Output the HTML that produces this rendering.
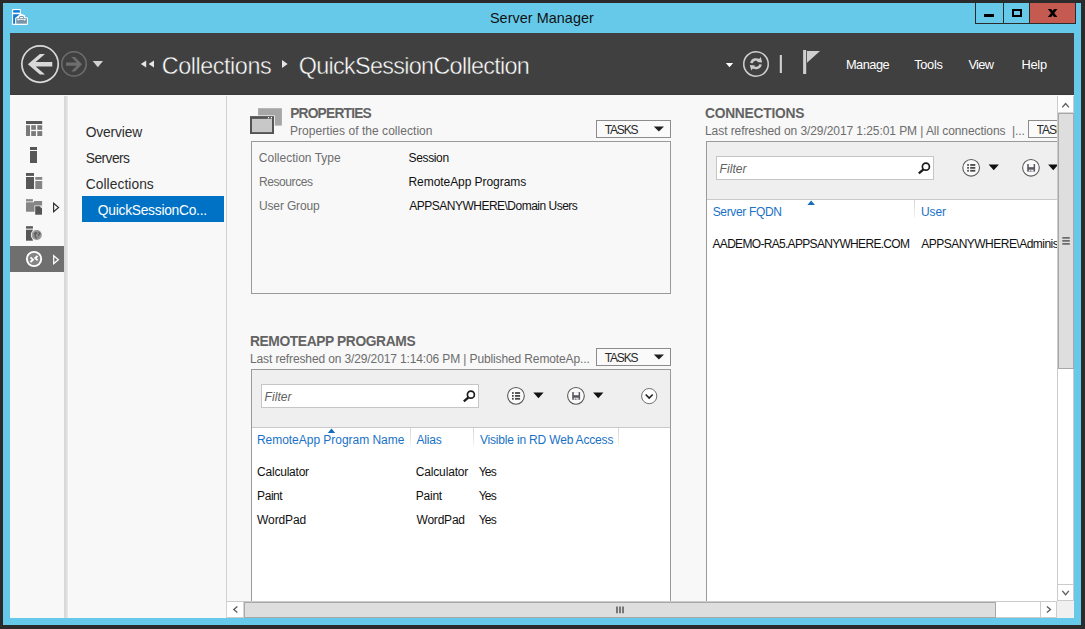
<!DOCTYPE html>
<html lang="en">
<head>
<meta charset="utf-8">
<title>Server Manager</title>
<style>
html,body{margin:0;padding:0;}
body{width:1085px;height:629px;overflow:hidden;background:#2b2b2b;position:relative;font-family:"Liberation Sans",sans-serif;}
.a{position:absolute;box-sizing:border-box;}
.t{position:absolute;white-space:pre;display:block;}
svg{position:absolute;overflow:visible;}
</style>
</head>
<body>
<!-- window frame -->
<div class="a" style="left:3px;top:3px;width:1078px;height:622px;background:#66c9ea;"></div>

<!-- caption buttons -->
<div class="a" style="left:975px;top:3px;width:101px;height:21px;background:#2b2b2b;"></div>
<div class="a" style="left:976px;top:3px;width:27px;height:20px;background:#66c9ea;"></div>
<div class="a" style="left:1004px;top:3px;width:25px;height:20px;background:#66c9ea;"></div>
<div class="a" style="left:1030px;top:3px;width:45.3px;height:20px;background:#c45a50;"></div>
<div class="a" style="left:984px;top:14px;width:10px;height:3px;background:#000;"></div>
<div class="a" style="left:1012px;top:9px;width:10px;height:8px;border:2px solid #000;"></div>
<svg style="left:1047px;top:8px;" width="12" height="10" viewBox="1047 8 12 10"><path d="M1047.9 9 H1051.2 L1057.4 17 H1054.1 Z M1054.1 9 H1057.4 L1051.2 17 H1047.9 Z" fill="#000"/></svg>

<!-- app icon -->
<svg style="left:12px;top:9px;" width="17" height="17" viewBox="12 9 17 17">
  <rect x="12" y="9" width="8.8" height="16" rx="1.1" fill="#fff"/>
  <path d="M20.6 13.4 L24.8 15.3 V18 H15.1 V17.6 Z" fill="#fff"/>
  <rect x="18.3" y="15.2" width="6.6" height="3.4" rx="1" fill="#fff"/>
  <rect x="15.1" y="17.2" width="12.8" height="7.8" rx="1.1" fill="#fff"/>
  <rect x="13.15" y="10.15" width="6.65" height="2.45" fill="#0f78d4"/>
  <path d="M13.15 14.2 H19.8 L15.1 17.9 V23.7 H13.15 Z" fill="#0f78d4"/>
  <rect x="19.6" y="16.5" width="3.9" height="2.4" rx="0.5" fill="#fff" stroke="#7a94aa" stroke-width="1"/>
  <rect x="16.2" y="18.2" width="10.7" height="5.5" fill="#7a94aa"/>
  <rect x="17.1" y="18.9" width="8.9" height="0.8" fill="#fff"/>
  <path d="M17.7 19.6 h1.8 l-0.9 1.2 Z M23.6 19.6 h1.8 l-0.9 1.2 Z" fill="#fff"/>
</svg>

<!-- header -->
<div class="a" style="left:10px;top:33px;width:1064px;height:62px;background:#404040;"></div>

<!-- back / forward -->
<svg style="left:20px;top:44px;" width="90" height="40" viewBox="20 44 90 40">
  <circle cx="40.05" cy="64.1" r="18.2" fill="none" stroke="#d9d9d9" stroke-width="1.7"/>
  <path d="M27.9 64.2 L39.9 54 H45 L35.7 61.9 H52.3 V66.5 H35.7 L45 74.4 H39.9 Z" fill="#d9d9d9"/>
  <circle cx="74" cy="63.9" r="12.2" fill="none" stroke="#6e6e6e" stroke-width="1.5"/>
  <path d="M82.1 64.2 L74.9 57 H71.2 L76.8 62.6 H66 V65.8 H76.8 L71.2 71.4 H74.9 Z" fill="#6e6e6e"/>
  <path d="M92.7 61 H103 L97.85 67.2 Z" fill="#d2d2d2"/>
</svg>

<!-- breadcrumb arrows -->
<svg style="left:140px;top:58px;" width="150" height="12" viewBox="140 58 150 12">
  <path d="M146.2 60.6 V67.6 L140.8 64.1 Z M154 60.6 V67.6 L148.6 64.1 Z" fill="#e6e6e6"/>
  <path d="M282 60 V68 L287.6 64 Z" fill="#e6e6e6"/>
</svg>

<!-- header right icons -->
<svg style="left:720px;top:46px;" width="110" height="36" viewBox="720 46 110 36">
  <path d="M725.8 63 H733.2 L729.5 67.3 Z" fill="#fff"/>
  <circle cx="756" cy="64" r="12.25" fill="none" stroke="#cfcfcf" stroke-width="1.55"/>
  <path d="M751.45 63.1 A4.7 4.3 0 0 1 759.9 61.2" fill="none" stroke="#cdcdcd" stroke-width="2.5"/>
  <path d="M760.7 56.9 L762.2 62.6 L757 62.1 Z" fill="#cdcdcd"/>
  <path d="M760.55 64.4 A4.7 4.3 0 0 1 752.1 66.3" fill="none" stroke="#cdcdcd" stroke-width="2.5"/>
  <path d="M751.3 70.6 L749.8 64.9 L755 65.4 Z" fill="#cdcdcd"/>
  <rect x="779.8" y="55" width="2.1" height="18" fill="#d0d0d0"/>
  <rect x="803.1" y="50" width="3.1" height="24" fill="#cfcfcf"/>
  <path d="M807 51 H820 L807 62.7 Z" fill="#cfcfcf"/>
</svg>

<!-- content background -->
<div class="a" style="left:10px;top:95px;width:1064px;height:523px;background:#f8f8f8;"></div>
<div class="a" style="left:10px;top:94px;width:1064px;height:1px;background:#3b3b3b;"></div>

<!-- sidebar -->
<div class="a" style="left:64px;top:96px;width:3.6px;height:522px;background:linear-gradient(90deg,#dadada,#d8d8d8 35%,#ebebeb);"></div>
<div class="a" style="left:226px;top:96px;width:1px;height:522px;background:#d2d2d2;"></div>
<div class="a" style="left:10px;top:246px;width:54px;height:26px;background:#6f6f6f;"></div>

<!-- sidebar icons -->
<svg style="left:26px;top:120px;" width="36" height="150" viewBox="26 120 36 150">
  <!-- dashboard -->
  <rect x="26" y="121" width="16.2" height="3" fill="#575757"/>
  <rect x="26" y="125.2" width="4" height="10.8" fill="#7a7a7a"/>
  <rect x="31.2" y="125.2" width="4.7" height="4.6" fill="#7a7a7a"/>
  <rect x="37.3" y="125.2" width="4.9" height="4.6" fill="#7a7a7a"/>
  <rect x="31.2" y="131.1" width="4.7" height="4.9" fill="#7a7a7a"/>
  <rect x="37.3" y="131.1" width="4.9" height="4.9" fill="#7a7a7a"/>
  <!-- local server -->
  <rect x="30" y="147" width="7" height="3" fill="#575757"/>
  <rect x="30" y="151" width="7" height="12" fill="#575757"/>
  <!-- all servers -->
  <rect x="26" y="173" width="8" height="2.9" fill="#575757"/>
  <rect x="26" y="177" width="8" height="12" fill="#575757"/>
  <rect x="35.3" y="177" width="6.9" height="2.8" fill="#858585"/>
  <rect x="35.3" y="181" width="6.9" height="8" fill="#858585"/>
  <!-- file services -->
  <rect x="26" y="199.1" width="6.9" height="2.4" fill="#8b8b8b"/>
  <path d="M26 202.3 H34 V201 H42.1 V211.8 H26 Z" fill="#868686"/>
  <path d="M34.5 205.5 H42.7 V215.4 H34.5 Z" fill="#f8f8f8"/>
  <path d="M35.2 206.2 H42 V214.7 H35.2 Z" fill="#555"/>
  <path d="M39.4 206.2 H42 V208.6 Z" fill="#f1f1f1"/>
  <path d="M39.2 206.6 V208.8 H41.6" fill="none" stroke="#555" stroke-width="0.7"/>
  <path d="M53.6 203.3 L58.6 207.5 L53.6 211.7 Z" fill="none" stroke="#2e2e2e" stroke-width="1.15"/>
  <!-- IIS -->
  <rect x="26" y="226.2" width="6.9" height="2.4" fill="#575757"/>
  <rect x="26" y="229.7" width="6.9" height="11" fill="#575757"/>
  <circle cx="36.7" cy="235" r="5.9" fill="#f4f4f4"/>
  <circle cx="36.7" cy="235" r="5" fill="#8e8e8e"/>
  <circle cx="36.7" cy="235" r="4.3" fill="none" stroke="#a8a8a8" stroke-width="0.7"/>
  <path d="M33.6 233.4 l1.8 -1.6 l1.6 0.4 l0.2 1.6 l-1.4 0.8 l0.2 1.8 l1.2 1 l-0.6 1.6 l-1.6 -1.4 l-0.4 -2 Z M38.4 231.6 l1.8 0.8 l0.6 2 l-1.2 0.4 l-0.8 1.8 l-0.8 -1.6 l0.8 -1.4 Z" fill="#626262"/>
  <!-- RDS (selected) -->
  <circle cx="34.05" cy="259" r="7.15" fill="#858585" stroke="#fff" stroke-width="1.9"/>
  <path d="M30.5 257.4 L33 259.7 L30.5 262 M37.6 256 L35.2 258.1 L37.6 260.2" fill="none" stroke="#fff" stroke-width="1.8"/>
  <path d="M53.7 255.7 L58.4 259.65 L53.7 263.6 Z" fill="none" stroke="#fff" stroke-width="1.25"/>
</svg>

<!-- nav selection -->
<div class="a" style="left:82px;top:196px;width:142px;height:26px;background:#0072c6;"></div>

<!-- PROPERTIES icon -->
<svg style="left:249px;top:108px;" width="34" height="28" viewBox="249 108 34 28">
  <rect x="258.1" y="108.2" width="23.8" height="17.4" fill="#a6a6a6"/>
  <rect x="249.3" y="115.4" width="25.5" height="19.3" fill="#f8f8f8"/>
  <rect x="250" y="116.1" width="24" height="17.9" fill="#545454"/>
  <rect x="252" y="118.9" width="20" height="13.2" fill="#c8c8c8"/>
  <rect x="267.9" y="117" width="1.2" height="1.4" fill="#fff"/><rect x="270.8" y="117" width="1.2" height="1.4" fill="#fff"/>
</svg>

<!-- TASKS buttons -->
<div class="a" style="left:596px;top:120px;width:75px;height:18px;border:1px solid #8c8c8c;background:#fafafa;"></div>
<div class="a" style="left:596px;top:348px;width:75px;height:18px;border:1px solid #8c8c8c;background:#fafafa;"></div>
<div class="a" style="left:1028px;top:120px;width:29px;height:18px;border:1px solid #8c8c8c;border-right:none;background:#fafafa;"></div>
<svg style="left:650px;top:120px;" width="20" height="250" viewBox="650 120 20 250">
  <path d="M653.8 126.4 H664 L658.9 131.6 Z" fill="#1e1e1e"/>
  <path d="M653.8 354.4 H664 L658.9 359.6 Z" fill="#1e1e1e"/>
</svg>

<!-- PROPERTIES box -->
<div class="a" style="left:251px;top:141px;width:420px;height:153px;border:1px solid #9a9a9a;background:#f8f8f8;"></div>

<!-- REMOTEAPP box -->
<div class="a" style="left:251px;top:369px;width:420px;height:232px;border:1px solid #9a9a9a;border-bottom:none;background:#fff;"></div>
<div class="a" style="left:252px;top:370px;width:418px;height:57px;background:#efefef;"></div>
<div class="a" style="left:252px;top:427px;width:418px;height:1px;background:#c9c9c9;"></div>
<div class="a" style="left:261px;top:384px;width:218px;height:24px;border:1px solid #c6c6c6;background:#fff;"></div>
<div class="a" style="left:410px;top:428px;width:1px;height:18px;background:linear-gradient(#d4d4d4,#f4f4f4);"></div>
<div class="a" style="left:473px;top:428px;width:1px;height:18px;background:linear-gradient(#d4d4d4,#f4f4f4);"></div>
<div class="a" style="left:618px;top:428px;width:1px;height:18px;background:linear-gradient(#d4d4d4,#f4f4f4);"></div>

<!-- CONNECTIONS box -->
<div class="a" style="left:706px;top:141px;width:352px;height:460px;border:1px solid #9a9a9a;border-right:none;border-bottom:none;background:#fff;"></div>
<div class="a" style="left:707px;top:142px;width:350px;height:57px;background:#efefef;"></div>
<div class="a" style="left:707px;top:199px;width:350px;height:1px;background:#c9c9c9;"></div>
<div class="a" style="left:716px;top:156px;width:218px;height:24px;border:1px solid #c6c6c6;background:#fff;"></div>
<div class="a" style="left:914px;top:200px;width:1px;height:18px;background:linear-gradient(#d4d4d4,#f4f4f4);"></div>

<!-- toolbar icons: remoteapp -->
<svg style="left:460px;top:384px;" width="200" height="24" viewBox="460 384 200 24">
  <circle cx="470.9" cy="394.7" r="3.5" fill="none" stroke="#1c1c1c" stroke-width="1.7"/><path d="M468.5 397.4 L463.8 401.4" stroke="#1c1c1c" stroke-width="2.3" fill="none"/>
  <circle cx="515.95" cy="395.85" r="8.35" fill="#fafafa" stroke="#5a5a5a" stroke-width="1.1"/>
  <rect x="512.00" y="392.10" width="1.7" height="1.8" fill="#484848"/><rect x="515.00" y="392.10" width="5.1" height="1.8" fill="#484848"/>
  <rect x="512.00" y="395.00" width="1.7" height="1.8" fill="#484848"/><rect x="515.00" y="395.00" width="5.1" height="1.8" fill="#484848"/>
  <rect x="512.00" y="397.90" width="1.7" height="1.8" fill="#484848"/><rect x="515.00" y="397.90" width="5.1" height="1.8" fill="#484848"/>
  <path d="M533.3 392.60 h10.3 l-5.15 5.6 Z" fill="#111"/>
  <circle cx="575.95" cy="395.85" r="8.35" fill="#fafafa" stroke="#5a5a5a" stroke-width="1.1"/>
  <rect x="572.20" y="392.10" width="7.9" height="7.6" fill="#585a62"/>
  <rect x="573.80" y="392.10" width="4.8" height="3.1" fill="#fafafa"/>
  <rect x="573.80" y="397.70" width="4.8" height="2" fill="#e2e2e4"/><rect x="575.20" y="398.60" width="1" height="1.1" fill="#585a62"/>
  <path d="M593.1 392.60 h10.3 l-5.15 5.6 Z" fill="#111"/>
  <circle cx="649.2" cy="396.1" r="7.6" fill="#fff" stroke="#707070" stroke-width="1"/>
  <path d="M645.7 394.5 L649.2 398 L652.7 394.5" fill="none" stroke="#222" stroke-width="1.7"/>
</svg>

<!-- toolbar icons: connections -->
<svg style="left:915px;top:156px;width:142px;height:24px;overflow:hidden;" viewBox="915 156 142 24">
  <circle cx="925.9" cy="166.7" r="3.5" fill="none" stroke="#1c1c1c" stroke-width="1.7"/><path d="M923.5 169.4 L918.8 173.4" stroke="#1c1c1c" stroke-width="2.3" fill="none"/>
  <circle cx="971.15" cy="167.8" r="8.35" fill="#fafafa" stroke="#5a5a5a" stroke-width="1.1"/>
  <rect x="967.20" y="164.05" width="1.7" height="1.8" fill="#484848"/><rect x="970.20" y="164.05" width="5.1" height="1.8" fill="#484848"/>
  <rect x="967.20" y="166.95" width="1.7" height="1.8" fill="#484848"/><rect x="970.20" y="166.95" width="5.1" height="1.8" fill="#484848"/>
  <rect x="967.20" y="169.85" width="1.7" height="1.8" fill="#484848"/><rect x="970.20" y="169.85" width="5.1" height="1.8" fill="#484848"/>
  <path d="M988.6 164.55 h10.3 l-5.15 5.6 Z" fill="#111"/>
  <circle cx="1030.95" cy="167.8" r="8.35" fill="#fafafa" stroke="#5a5a5a" stroke-width="1.1"/>
  <rect x="1027.20" y="164.05" width="7.9" height="7.6" fill="#585a62"/>
  <rect x="1028.80" y="164.05" width="4.8" height="3.1" fill="#fafafa"/>
  <rect x="1028.80" y="169.65" width="4.8" height="2" fill="#e2e2e4"/><rect x="1030.20" y="170.55" width="1" height="1.1" fill="#585a62"/>
  <path d="M1048.1 164.55 h10.3 l-5.15 5.6 Z" fill="#111"/>
</svg>

<!-- sort arrows -->
<svg style="left:320px;top:190px;" width="520" height="250" viewBox="320 190 520 250">
  <path d="M327.8 432.9 H335.2 L331.5 428.5 Z" fill="#166bbb"/>
  <path d="M807.4 204.9 H814.9 L811.15 200.5 Z" fill="#166bbb"/>
</svg>

<span class="t" id="t0" style="left:489.92px;top:9.11px;font-size:14.4px;line-height:19px;letter-spacing:0.059px;color:#111;font-weight:400;font-style:normal;">Server Manager</span>
<span class="t" id="t1" style="left:161.86px;top:50.59px;font-size:23.4px;line-height:30px;letter-spacing:-0.462px;color:#ffffff;font-weight:400;font-style:normal;-webkit-text-stroke:0.45px #404040;">Collections</span>
<span class="t" id="t2" style="left:298.66px;top:50.59px;font-size:23.4px;line-height:30px;letter-spacing:-0.690px;color:#ffffff;font-weight:400;font-style:normal;-webkit-text-stroke:0.45px #404040;">QuickSessionCollection</span>
<span class="t" id="t3" style="left:845.89px;top:56.06px;font-size:12.8px;line-height:17px;letter-spacing:-0.492px;color:#fff;font-weight:400;font-style:normal;">Manage</span>
<span class="t" id="t4" style="left:914.19px;top:56.06px;font-size:12.8px;line-height:17px;letter-spacing:-0.300px;color:#fff;font-weight:400;font-style:normal;">Tools</span>
<span class="t" id="t5" style="left:968.49px;top:56.06px;font-size:12.8px;line-height:17px;letter-spacing:-0.690px;color:#fff;font-weight:400;font-style:normal;">View</span>
<span class="t" id="t6" style="left:1021.59px;top:56.06px;font-size:12.8px;line-height:17px;letter-spacing:-0.283px;color:#fff;font-weight:400;font-style:normal;">Help</span>
<span class="t" id="t7" style="left:85.75px;top:123.62px;font-size:13.8px;line-height:18px;letter-spacing:-0.154px;color:#2d2d2d;font-weight:400;font-style:normal;">Overview</span>
<span class="t" id="t8" style="left:85.75px;top:149.62px;font-size:13.8px;line-height:18px;letter-spacing:-0.560px;color:#2d2d2d;font-weight:400;font-style:normal;">Servers</span>
<span class="t" id="t9" style="left:85.75px;top:176.42px;font-size:13.8px;line-height:18px;letter-spacing:0.053px;color:#2d2d2d;font-weight:400;font-style:normal;">Collections</span>
<span class="t" id="t10" style="left:97.85px;top:202.22px;font-size:13.8px;line-height:18px;letter-spacing:-0.267px;color:#fff;font-weight:400;font-style:normal;">QuickSessionCo...</span>
<span class="t" id="t11" style="left:290.15px;top:105.02px;font-size:13.8px;line-height:18px;letter-spacing:-0.807px;color:#636363;font-weight:700;font-style:normal;">PROPERTIES</span>
<span class="t" id="t12" style="left:704.95px;top:105.02px;font-size:13.8px;line-height:18px;letter-spacing:-0.253px;color:#636363;font-weight:700;font-style:normal;">CONNECTIONS</span>
<span class="t" id="t13" style="left:249.95px;top:332.92px;font-size:13.8px;line-height:18px;letter-spacing:-0.387px;color:#636363;font-weight:700;font-style:normal;">REMOTEAPP PROGRAMS</span>
<span class="t" id="t14" style="left:290.02px;top:122.84px;font-size:12.0px;line-height:16px;letter-spacing:0.040px;color:#6d6d6d;font-weight:400;font-style:normal;">Properties of the collection</span>
<span class="t" id="t15" style="left:705.02px;top:122.84px;font-size:12.0px;line-height:16px;letter-spacing:-0.075px;color:#6d6d6d;font-weight:400;font-style:normal;">Last refreshed on 3/29/2017 1:25:01 PM | All connections  |...</span>
<span class="t" id="t16" style="left:250.02px;top:350.74px;font-size:12.0px;line-height:16px;letter-spacing:-0.124px;color:#6d6d6d;font-weight:400;font-style:normal;">Last refreshed on 3/29/2017 1:14:06 PM | Published RemoteAp...</span>
<span class="t" id="t17" style="left:604.72px;top:121.64px;font-size:12.0px;line-height:16px;letter-spacing:-1.158px;color:#2a2a2a;font-weight:400;font-style:normal;">TASKS</span>
<span class="t" id="t18" style="left:604.72px;top:349.74px;font-size:12.0px;line-height:16px;letter-spacing:-1.158px;color:#2a2a2a;font-weight:400;font-style:normal;">TASKS</span>
<span class="t" id="t19" style="left:1036.52px;top:121.64px;font-size:12.0px;line-height:16px;letter-spacing:-0.966px;color:#2a2a2a;font-weight:400;font-style:normal;width:20.0px;overflow:hidden;">TASKS</span>
<span class="t" id="t20" style="left:258.82px;top:149.64px;font-size:12.0px;line-height:16px;letter-spacing:0.001px;color:#6e6e6e;font-weight:400;font-style:normal;">Collection Type</span>
<span class="t" id="t21" style="left:259.02px;top:173.74px;font-size:12.0px;line-height:16px;letter-spacing:-0.424px;color:#6e6e6e;font-weight:400;font-style:normal;">Resources</span>
<span class="t" id="t22" style="left:259.02px;top:197.74px;font-size:12.0px;line-height:16px;letter-spacing:-0.159px;color:#6e6e6e;font-weight:400;font-style:normal;">User Group</span>
<span class="t" id="t23" style="left:408.52px;top:149.64px;font-size:12.0px;line-height:16px;letter-spacing:-0.352px;color:#111;font-weight:400;font-style:normal;">Session</span>
<span class="t" id="t24" style="left:408.52px;top:173.74px;font-size:12.0px;line-height:16px;letter-spacing:-0.060px;color:#111;font-weight:400;font-style:normal;">RemoteApp Programs</span>
<span class="t" id="t25" style="left:409.32px;top:197.74px;font-size:12.0px;line-height:16px;letter-spacing:-0.510px;color:#111;font-weight:400;font-style:normal;">APPSANYWHERE\Domain Users</span>
<span class="t" id="t26" style="left:256.92px;top:431.84px;font-size:12.0px;line-height:16px;letter-spacing:-0.028px;color:#1972c6;font-weight:400;font-style:normal;">RemoteApp Program Name</span>
<span class="t" id="t27" style="left:416.52px;top:431.84px;font-size:12.0px;line-height:16px;letter-spacing:-0.175px;color:#1972c6;font-weight:400;font-style:normal;">Alias</span>
<span class="t" id="t28" style="left:479.92px;top:431.84px;font-size:12.0px;line-height:16px;letter-spacing:-0.179px;color:#1972c6;font-weight:400;font-style:normal;">Visible in RD Web Access</span>
<span class="t" id="t29" style="left:257.12px;top:463.64px;font-size:12.0px;line-height:16px;letter-spacing:-0.225px;color:#111;font-weight:400;font-style:normal;">Calculator</span>
<span class="t" id="t30" style="left:415.72px;top:463.64px;font-size:12.0px;line-height:16px;letter-spacing:-0.153px;color:#111;font-weight:400;font-style:normal;">Calculator</span>
<span class="t" id="t31" style="left:478.72px;top:463.64px;font-size:12.0px;line-height:16px;letter-spacing:-0.753px;color:#111;font-weight:400;font-style:normal;">Yes</span>
<span class="t" id="t32" style="left:257.12px;top:487.54px;font-size:12.0px;line-height:16px;letter-spacing:-0.444px;color:#111;font-weight:400;font-style:normal;">Paint</span>
<span class="t" id="t33" style="left:415.72px;top:487.54px;font-size:12.0px;line-height:16px;letter-spacing:-0.224px;color:#111;font-weight:400;font-style:normal;">Paint</span>
<span class="t" id="t34" style="left:478.72px;top:487.54px;font-size:12.0px;line-height:16px;letter-spacing:-0.753px;color:#111;font-weight:400;font-style:normal;">Yes</span>
<span class="t" id="t35" style="left:257.12px;top:512.44px;font-size:12.0px;line-height:16px;letter-spacing:-0.110px;color:#111;font-weight:400;font-style:normal;">WordPad</span>
<span class="t" id="t36" style="left:416.52px;top:512.44px;font-size:12.0px;line-height:16px;letter-spacing:-0.213px;color:#111;font-weight:400;font-style:normal;">WordPad</span>
<span class="t" id="t37" style="left:478.72px;top:512.44px;font-size:12.0px;line-height:16px;letter-spacing:-0.753px;color:#111;font-weight:400;font-style:normal;">Yes</span>
<span class="t" id="t38" style="left:712.72px;top:203.84px;font-size:12.0px;line-height:16px;letter-spacing:-0.350px;color:#1972c6;font-weight:400;font-style:normal;">Server FQDN</span>
<span class="t" id="t39" style="left:921.12px;top:203.84px;font-size:12.0px;line-height:16px;letter-spacing:-0.176px;color:#1972c6;font-weight:400;font-style:normal;">User</span>
<span class="t" id="t40" style="left:712.52px;top:235.74px;font-size:12.0px;line-height:16px;letter-spacing:-0.689px;color:#111;font-weight:400;font-style:normal;">AADEMO-RA5.APPSANYWHERE.COM</span>
<span class="t" id="t41" style="left:921.22px;top:235.74px;font-size:12.0px;line-height:16px;letter-spacing:-0.517px;color:#111;font-weight:400;font-style:normal;width:136.0px;overflow:hidden;">APPSANYWHERE\Administrator</span>
<span class="t" id="t42" style="left:264.52px;top:389.44px;font-size:12.0px;line-height:16px;letter-spacing:0.078px;color:#606060;font-weight:400;font-style:italic;">Filter</span>
<span class="t" id="t43" style="left:719.52px;top:160.54px;font-size:12.0px;line-height:16px;letter-spacing:0.078px;color:#606060;font-weight:400;font-style:italic;">Filter</span>

<!-- vertical scrollbar -->
<div class="a" style="left:1057px;top:96px;width:17px;height:505px;background:#fff;border-left:1px solid #cbcbcb;border-right:1px solid #cbcbcb;"></div>
<div class="a" style="left:1058px;top:112px;width:15px;height:1px;background:#d6d6d6;"></div>
<div class="a" style="left:1058px;top:113px;width:16px;height:256px;background:#dedede;border:1px solid #a8a8a8;"></div>
<div class="a" style="left:1057px;top:584px;width:17px;height:17px;background:#fff;border:1px solid #cbcbcb;"></div>
<svg style="left:1057px;top:96px;" width="17" height="510" viewBox="1057 96 17 510">
  <path d="M1062.3 107.4 L1065.6 103.5 L1068.9 107.4" fill="none" stroke="#5e5e5e" stroke-width="1.35"/>
  <path d="M1062.3 590.9 L1065.6 594.8 L1068.9 590.9" fill="none" stroke="#5e5e5e" stroke-width="1.35"/>
  <path d="M1062.3 237 h7.5 v1.8 h-7.5 Z M1062.3 240 h7.5 v1.8 h-7.5 Z M1062.3 243 h7.5 v1.8 h-7.5 Z" fill="#6c6c6c"/>
</svg>

<!-- horizontal scrollbar -->
<div class="a" style="left:227px;top:601px;width:830px;height:17px;background:#fff;border-top:1px solid #cbcbcb;border-bottom:1px solid #cbcbcb;"></div>
<div class="a" style="left:243px;top:602px;width:1px;height:15px;background:#d6d6d6;"></div>
<div class="a" style="left:244px;top:602px;width:752px;height:16px;background:#dedede;border:1px solid #a8a8a8;"></div>
<div class="a" style="left:1040px;top:601px;width:17px;height:17px;background:#fff;border:1px solid #cbcbcb;"></div>
<div class="a" style="left:1057px;top:601px;width:17px;height:17px;background:#f0f0f0;"></div>
<svg style="left:227px;top:601px;" width="830" height="17" viewBox="227 601 830 17">
  <path d="M237.4 606.4 L233.8 609.5 L237.4 612.6" fill="none" stroke="#5e5e5e" stroke-width="1.35"/>
  <path d="M1046.9 606.4 L1050.5 609.5 L1046.9 612.6" fill="none" stroke="#5e5e5e" stroke-width="1.35"/>
  <path d="M616.1 606.5 h1.8 v6.7 h-1.8 Z M619.1 606.5 h1.8 v6.7 h-1.8 Z M622.1 606.5 h1.8 v6.7 h-1.8 Z" fill="#6c6c6c"/>
</svg>
</body>
</html>
